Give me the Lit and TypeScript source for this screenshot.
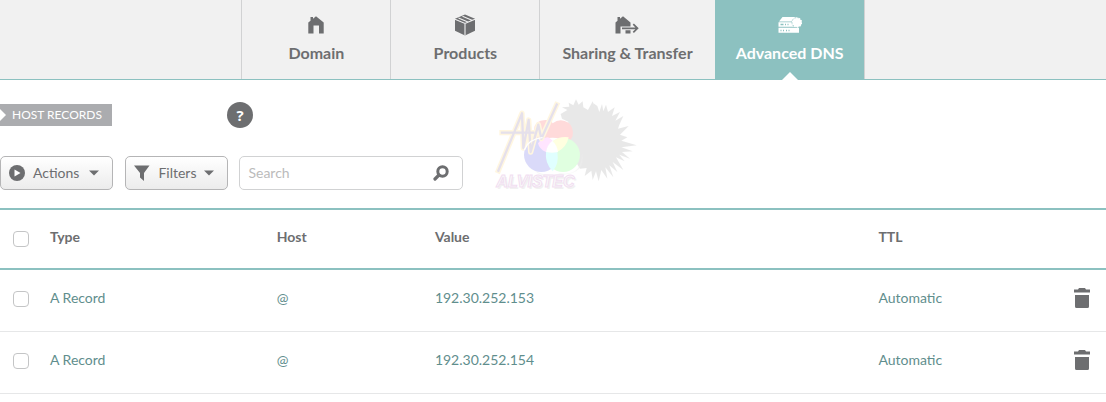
import { LitElement, html, css, nothing } from "lit";
import { customElement } from "lit/decorators.js";
import { classMap } from "lit/directives/class-map.js";

const icons = {
  domain: html`<svg width="16" height="18" viewBox="0 0 16 18" aria-hidden="true"><path d="M2.500 1h2.500v1.800L8 .3 15.700 6.500v11H11V9.500H5.500v8H.3V6.500L2.500 4.700z"/></svg>`,
  products: html`<svg width="22" height="22" viewBox="0 0 22 22" aria-hidden="true">
    <path d="M11 .5 21 4.800v12L11 21.500 1 16.800v-12z"/>
    <path d="M1 5.300 11 9.500l10-4.200M11 9.500v12M4.500 4l10 4.200M8.500 2.200l10 4.200" fill="none" stroke="#f1f1f1" stroke-width="1.100"/>
  </svg>`,
  sharing: html`<svg width="24" height="18" viewBox="0 0 24 18" aria-hidden="true">
    <path d="M2.500 1h2.500v1.800L8 .3 15.500 6.500v4H5.500v7H.5v-11l2-1.800zM10.500 14.300h5v3.200h-5z"/>
    <path d="M7 12.300h15M18.300 8.200l4.200 4.100-4.200 4.100" fill="none" stroke="currentColor" stroke-width="1.700"/>
  </svg>`,
  dns: html`<svg width="24" height="18" viewBox="0 0 24 18" aria-hidden="true">
    <path d="M4.500 1H18l3 4.500H1zM.5 6.300H21v4.400H.5zM.5 11.800H21v5H.5z"/>
    <circle cx="19" cy="6.500" r="5" stroke="#8cc1c0" stroke-width=".8"/>
    <circle cx="19" cy="6.500" r="4.500" fill="none" stroke="#fff" stroke-width="1.400" stroke-dasharray="1.500 1.300"/>
    <path d="M2.500 8.600h3M7 8.600h1M9.500 8.600h1M2.500 14.400h1M5 14.400h1M8 14.400h1M10.500 14.400h1" stroke="#8cc1c0" stroke-width="1.500"/>
  </svg>`,
};

const tabs = [
  { label: "Domain", icon: icons.domain },
  { label: "Products", icon: icons.products },
  { label: "Sharing & Transfer", icon: icons.sharing },
  { label: "Advanced DNS", icon: icons.dns, active: true },
];

const records = [
  { type: "A Record", host: "@", value: "192.30.252.153", ttl: "Automatic" },
  { type: "A Record", host: "@", value: "192.30.252.154", ttl: "Automatic" },
];

@customElement("app-root")
export class AppRoot extends LitElement {
  static styles = css`
    :host { display: block; font: 14px/20px Lato, "Open Sans", sans-serif; color: #6d6e70; background: #fff; }
    * { box-sizing: border-box; }
    svg { display: block; fill: currentColor; }
    button, input { font: inherit; color: inherit; }
    .tabs { display: flex; justify-content: center; background: #f1f1f1; border-bottom: 1px solid #8cc1c0; }
    .tab { position: relative; display: flex; flex-direction: column; align-items: center; min-width: 149px; height: 79px; padding: 13px 22px 0; border-left: 1px solid #d1d2d3; color: inherit; text-decoration: none; font-size: 16px; font-weight: 700; }
    .tab:last-child { border-right: 1px solid #d1d2d3; min-width: 150px; padding: 13px 18px 0; }
    .glyph { display: grid; place-items: center; height: 24px; margin-bottom: 6px; }
    .active { background: #8cc1c0; color: #fff; border-left-color: #8cc1c0; }
    .active::after { content: ""; position: absolute; bottom: -1px; left: 50%; margin-left: -8px; border: 8px solid transparent; border-top: 0; border-bottom-color: #fff; }
    .top { display: grid; grid-template-columns: 227px 260px 1fr; padding-top: 22px; }
    .tag { justify-self: start; margin: 2px 0 0; padding: 0 10px 0 12px; height: 22px; font-size: 12px; line-height: 22px; font-weight: 400; color: #fff; background: #abacaf; position: relative; }
    .tag::before { content: ""; position: absolute; left: 0; top: 5px; border: 6px solid transparent; border-left-color: #fff; border-right: 0; }
    .help { width: 26px; height: 26px; border: 0; border-radius: 50%; padding: 0; background: #6d6e70; color: #fff; font: 700 15px/26px "Open Sans", sans-serif; }
    .bar { display: flex; grid-column: 1 / 3; margin-top: 28px; height: 34px; }
    .btn { display: flex; align-items: center; padding: 0 13px 0 8px; border: 1px solid #b5b5b6; border-radius: 5px; background: linear-gradient(#fff, #ececec); margin-right: 12px; gap: 8px; }
    .btn + .btn { margin-right: 11px; }
    .caret { margin-left: 2px; }
    .btn + .btn .caret { margin-left: 0; }
    .search { display: flex; align-items: center; width: 224px; border: 1px solid #d1d2d3; border-radius: 5px; padding: 0 13px 0 8px; }
    .search input { flex: 1; min-width: 0; border: 0; padding: 0; outline: 0; background: none; }
    .search input::placeholder { color: #bbb; opacity: 1; }
    .logo { grid-column: 3; grid-row: 1 / 3; height: 86px; opacity: .16; }
    .logo svg { overflow: visible; }
    .brand { font: italic 700 48px "Liberation Sans", Arial, sans-serif; }
    table { width: 100%; margin-top: 18px; border-collapse: separate; border-spacing: 0; table-layout: fixed; }
    th, td { text-align: left; padding: 0; }
    th { height: 62px; border-top: 2px solid #8cc1c0; border-bottom: 2px solid #8cc1c0; padding-bottom: 4px; }
    td { height: 62px; border-bottom: 1px solid #e6e7e8; color: #5f8e8d; padding-bottom: 6px; }
    .check { width: 50px; padding: 0 0 0 13px; }
    td.check { padding-bottom: 4px; }
    .check input { appearance: none; display: block; width: 16px; height: 16px; margin: 0; border: 1px solid #c4c5c6; border-radius: 4px; background: #fff; }
    .type { width: 20.500%; } .host { width: 14.300%; } .value { width: 40.100%; }
    .del { width: 32px; }
    .del button { display: block; border: 0; background: none; padding: 0; color: #6d6e70; }
  `;

  private caret = html`<svg class="caret" width="10" height="6" viewBox="0 0 10 6" aria-hidden="true"><path d="M0 .5h10L5 5.500z"/></svg>`;

  private logo() {
    return html`<svg width="145" height="95" viewBox="21 36 435 285" role="img" aria-label="Alvistec">
      <path fill="#777" d="M242 72 262 60 246 52 268 50 266 38 280 46 288 28 296 44 308 34 310 52 324 60 338 34 346 60 340 40 352 48 358 66 366 42 370 64 378 44 384 66 404 52 396 78 420 66 406 92 430 78 418 104 414 116 446 108 420 134 442 142 424 152 470 166 424 172 458 184 426 186 450 206 418 194 434 214 408 202 430 240 398 216 412 246 388 226 400 262 376 232 382 266 364 240 356 274 348 244 338 270 334 242 314 258 320 234 300 236 284 210 262 214 272 196 250 186 266 170 250 150 262 130 254 110 266 96 246 86z"/>
      <path fill="#999" opacity=".5" d="M140 215q45 65 100 35 65 10 66-60 12 60-58 64-80 10-108-39z"/>
      <path d="M162 120q2-32 38-30 14 2 18 10 22-18 48-2 16 14 12 40-6 14-14 16-52-22-90 2-12-12-12-36z" fill="#f22"/>
      <circle cx="184" cy="194" r="52" fill="#22d"/>
      <circle cx="249" cy="195" r="51" fill="#4f4"/>
      <path d="M174 160q12-18 30-18 12 6 14 12-16 12-20 32-20-8-24-26z" fill="#f6f"/>
      <path d="M218 154q20-16 48-12-6 30-34 44-2-20-14-32z" fill="#ff4"/>
      <path d="M198 186q16 2 34 0 6 36-14 58-24-24-20-58z" fill="#4ff"/>
      <path d="M217 152q14 12 17 34-18 4-36 0 2-20 19-34z" fill="#fff"/>
      <g fill="none" stroke-linejoin="round" stroke-linecap="square">
        <path d="M55 242 126 70 130 174 146 90 152 186 175 104 184 146 230 44M66 128H160" stroke="#fc4" stroke-width="16"/>
        <path d="M55 242 126 70 130 174 146 90 152 186 175 104 184 146 230 44M66 128H160" stroke="#648" stroke-width="7"/>
        <path d="M134 178q12-30 52-35" stroke="#fff" stroke-width="4"/>
      </g>
      <text class="brand" x="54" y="296" fill="#777" opacity=".6">ALVISTEC</text>
      <text class="brand" x="49" y="291" fill="#ddd" stroke="#a3a" stroke-width="3">ALVISTEC</text>
    </svg>`;
  }

  render() {
    return html`
      <nav class="tabs">
        ${tabs.map((t) => html`<a href="#" class=${classMap({ tab: true, active: !!t.active })} aria-current=${t.active ? "page" : nothing}><span class="glyph">${t.icon}</span>${t.label}</a>`)}
      </nav>
      <section class="top">
        <h2 class="tag">HOST RECORDS</h2>
        <button class="help" aria-label="Help">?</button>
        <div class="logo">${this.logo()}</div>
        <div class="bar">
          <button class="btn"><svg width="16" height="16" viewBox="0 0 16 16" aria-hidden="true"><circle cx="8" cy="8" r="8"/><path d="M5.500 4.500v7l6-3.500z" fill="#fff"/></svg>Actions ${this.caret}</button>
          <button class="btn"><svg width="16" height="16" viewBox="0 0 16 16" aria-hidden="true"><path d="M0 .5h15.500L10 8v8l-4-3.500V8z"/></svg>Filters ${this.caret}</button>
          <label class="search"><input type="text" aria-label="Search" placeholder="Search"><svg width="16" height="16" viewBox="0 0 16 16" aria-hidden="true"><circle cx="9.500" cy="6.500" r="4.700" fill="none" stroke="currentColor" stroke-width="3"/><path d="M6 10l-4 4" stroke="currentColor" stroke-width="3.200" stroke-linecap="round"/></svg></label>
        </div>
      </section>
      <table>
        <thead><tr><th class="check"><input type="checkbox" aria-label="Select all"></th><th class="type">Type</th><th class="host">Host</th><th class="value">Value</th><th>TTL</th><th class="del"></th></tr></thead>
        <tbody>
          ${records.map((r) => html`<tr><td class="check"><input type="checkbox" aria-label=${`Select ${r.value}`}></td><td>${r.type}</td><td>${r.host}</td><td>${r.value}</td><td>${r.ttl}</td><td class="del"><button aria-label="Delete"><svg width="16" height="20" viewBox="0 0 16 20" aria-hidden="true"><path d="M0 1.500h4L5 0h6l1 1.500h4v3H0zM1 7h14v11.500q0 1.500-1.500 1.500h-11Q1 20 1 18.500z"/></svg></button></td></tr>`)}
        </tbody>
      </table>`;
  }
}
